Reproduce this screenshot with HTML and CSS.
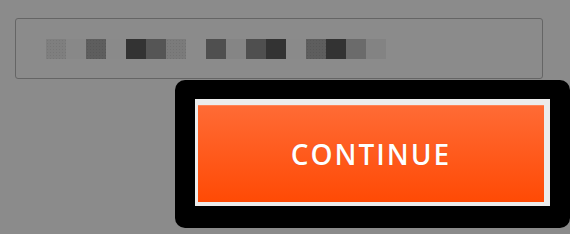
FILE: index.html
```html
<!DOCTYPE html>
<html>
<head>
<meta charset="utf-8">
<link rel="stylesheet" href="styles.css">
</head>
<body>
<div class="page">
  <div class="field">
    <div class="mask">
      <span class="sq c1 dot"></span><span class="sq c2"></span><span class="sq c3 dot"></span><span class="sq c4"></span><span class="sq c5"></span><span class="sq c6"></span><span class="sq c7 dot"></span><span class="sq c0"></span><span class="sq c8"></span><span class="sq c9"></span><span class="sq c8"></span><span class="sq c5"></span><span class="sq c4"></span><span class="sq c3 dot"></span><span class="sq c5"></span><span class="sq c10"></span><span class="sq c11"></span>
    </div>
  </div>
  <div class="cta">
    <div class="frame">
      <button class="btn">CONTINUE</button>
    </div>
  </div>
</div>
</body>
</html>
```
FILE: styles.css
```css
html, body {
  margin: 0;
  padding: 0;
  background: #8b8b8b;
}
.page {
  width: 570px;
  height: 234px;
  display: flex;
  flex-direction: column;
  align-items: flex-start;
  padding: 18px 0 0 15px;
  box-sizing: border-box;
}
.field {
  width: 528px;
  height: 61px;
  box-sizing: border-box;
  border: 1px solid #656565;
  border-radius: 3px;
  display: flex;
  align-items: center;
  padding-left: 30px;
}
.mask {
  display: flex;
  margin-top: 1px;
}
.sq {
  width: 20px;
  height: 20px;
  display: block;
}
.dot {
  background-image: radial-gradient(rgba(0,0,0,0.07) 0.6px, transparent 0.9px);
  background-size: 3px 3px;
}
.c0 { background-color: #8b8b8b; }
.c1 { background-color: #7f7f7f; }
.c2 { background-color: #888888; }
.c3 { background-color: #5e5e5e; }
.c4 { background-color: #8a8a8a; }
.c5 { background-color: #333333; }
.c6 { background-color: #555555; }
.c7 { background-color: #7b7b7b; }
.c8 { background-color: #4f4f4f; }
.c9 { background-color: #858585; }
.c10 { background-color: #6b6b6b; }
.c11 { background-color: #838383; }
.cta {
  margin: 1px 0 0 160px;
  width: 395px;
  height: 148px;
  box-sizing: border-box;
  background: #000;
  border-radius: 10px;
  padding: 19px 20px 22px 20px;
}
.frame {
  width: 355px;
  height: 107px;
  box-sizing: border-box;
  background: #ececec;
  padding: 6px 6px 4px 3px;
  display: flex;
}
.btn {
  flex: 1;
  border: 0;
  margin: 0;
  padding: 0;
  background: linear-gradient(#ff6b35, #ff4a05);
  box-shadow: inset 0 1px 0 #ff8456;
  color: #fff;
  font-family: "Open Sans", "Liberation Sans", sans-serif;
  font-weight: 600;
  font-size: 28px;
  letter-spacing: 2px;
  text-shadow: 0 0 1px rgba(150,40,0,0.4);
  cursor: pointer;
}
```
